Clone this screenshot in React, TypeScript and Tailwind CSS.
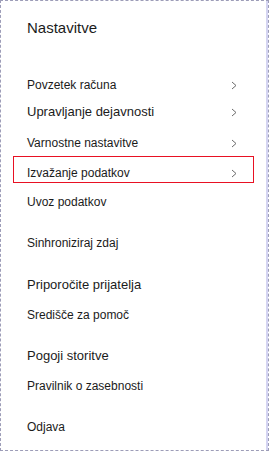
import React from 'react';

function Chevron() {
  return (
    <svg width="6" height="9" viewBox="0 0 6 9" className="shrink-0">
      <polyline points="1,1 5,4.5 1,8" fill="none" stroke="#6b6b6b" strokeWidth="1" />
    </svg>
  );
}

type RowProps = { label: string; size?: 'sm' | 'md'; chevron?: boolean; className?: string };

function Row({ label, size = 'sm', chevron = false, className = '' }: RowProps) {
  return (
    <div className={`flex h-4 items-center justify-between ${className}`}>
      <span className={`leading-4 text-[#1b1b1b] ${size === 'md' ? 'text-[13px]' : 'text-[12px]'}`}>{label}</span>
      {chevron && <Chevron />}
    </div>
  );
}

export default function App() {
  return (
    <div
      className="h-[451px] w-[269px] border border-dashed border-[#9d9db8] bg-white pl-[26px] pr-[31px] shadow-[inset_-2px_0_0_#d4d4f2]"
      style={{ fontFamily: '"Liberation Sans", Arial, sans-serif' }}
    >
      <div className="mt-[17px] h-5 text-[15px] leading-5 text-[#1b1b1b]">Nastavitve</div>

      <Row label="Povzetek računa" chevron className="mt-[39px]" />
      <Row label="Upravljanje dejavnosti" size="md" chevron className="mt-[11px]" />
      <Row label="Varnostne nastavitve" chevron className="mt-[15px]" />

      <div className="-ml-[14px] -mr-[17px] mt-[5px] border border-[#e81123] pb-[1px] pl-[13px] pr-[16px] pt-[8px]">
        <Row label="Izvažanje podatkov" chevron />
      </div>

      <Row label="Uvoz podatkov" className="mt-[11px]" />
      <Row label="Sinhroniziraj zdaj" className="mt-[25px]" />
      <Row label="Priporočite prijatelja" size="md" className="mt-[26px]" />
      <Row label="Središče za pomoč" className="mt-[14px]" />
      <Row label="Pogoji storitve" size="md" className="mt-[25px]" />
      <Row label="Pravilnik o zasebnosti" className="mt-[14px]" />
      <Row label="Odjava" className="mt-[25px]" />
    </div>
  );
}
